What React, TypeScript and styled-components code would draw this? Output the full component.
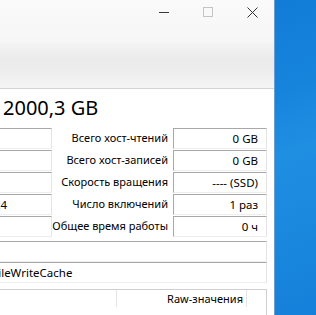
import React from 'react';
import styled, { createGlobalStyle } from 'styled-components';

const GlobalStyle = createGlobalStyle`
  html, body {
    margin: 0;
    padding: 0;
    overflow: hidden;
  }
  body {
    font-family: "Noto Sans", "Open Sans", "Liberation Sans", sans-serif;
    font-size: 11px;
    color: #000;
  }
`;

// рабочий стол за окном
const Desktop = styled.div`
  display: flex;
  width: 316px;
  height: 315px;
  background: linear-gradient(160deg, #0b74d1 0%, #1784dc 45%, #1f8fe2 60%, #1580d9 100%);
`;

const Window = styled.div`
  width: 274px;
  height: 315px;
  background: #fff;
  border-right: 1px solid #6f9ccc;
  display: flex;
  flex-direction: column;
  overflow: hidden;
`;

const TitleBar = styled.div`
  height: 43px;
  flex: none;
  background: linear-gradient(#fafafa, #f6f6f6);
  display: flex;
  justify-content: flex-end;
  align-items: flex-start;
`;

const CaptionButton = styled.div`
  width: 44px;
  height: 24px;
  display: flex;
  align-items: center;
  justify-content: center;
`;

const MenuBand = styled.div`
  height: 45px;
  flex: none;
  background: linear-gradient(#f3f3f3 0%, #ebebeb 35%, #ececec 60%, #f5f5f5 100%);
  border-bottom: 1px solid #d3d3d3;
`;

const Content = styled.div`
  flex: 1;
  padding: 7px 7px 0 0;
  display: flex;
  flex-direction: column;
`;

const Capacity = styled.div`
  font-size: 20px;
  line-height: 24px;
  padding-left: 3px;
  white-space: nowrap;
`;

const InfoGrid = styled.div`
  margin-top: 8px;
  display: grid;
  grid-template-columns: 52px minmax(0, 1fr) 94px;
  grid-auto-rows: 22px;
`;

const Field = styled.div`
  box-sizing: border-box;
  height: 21px;
  border-top: 1px solid #a8a8a8;
  border-left: 1px solid #a8a8a8;
  border-right: 1px solid #e4e4e4;
  border-bottom: 1px solid #eeeeee;
  display: flex;
  align-items: center;
  justify-content: flex-end;
  padding-right: 8px;
  font-size: 11.5px;
  white-space: nowrap;
  overflow: hidden;
`;

const CutField = styled(Field)`
  border-left: none;
  padding-right: 44px;
`;

const Label = styled.div`
  display: flex;
  align-items: center;
  justify-content: flex-end;
  padding-right: 5px;
  height: 19px;
  white-space: nowrap;
`;

const WideField = styled.div<{ $gap: number }>`
  box-sizing: border-box;
  margin-top: ${p => p.$gap}px;
  height: 21px;
  border-top: 1px solid #a8a8a8;
  border-right: 1px solid #e4e4e4;
  border-bottom: 1px solid #eeeeee;
  display: flex;
  align-items: center;
  font-size: 11.5px;
  white-space: nowrap;
  overflow: hidden;
`;

const FeatureText = styled.span`
  margin-left: -29px;
`;

const Table = styled.div`
  margin-top: 6px;
  height: 40px;
  border-top: 1px solid #cfcfcf;
  border-right: 1px solid #cfcfcf;
`;

const HeaderRow = styled.div`
  display: grid;
  grid-template-columns: 117px 130px 1fr;
  height: 17px;
`;

const HeaderCell = styled.div`
  border-right: 1px solid #e5e5e5;
  display: flex;
  align-items: center;
  justify-content: flex-end;
  padding-right: 3px;
  white-space: nowrap;
`;

const rows = [
  { left: '', label: 'Всего хост-чтений', value: '0 GB' },
  { left: '', label: 'Всего хост-записей', value: '0 GB' },
  { left: '', label: 'Скорость вращения', value: '---- (SSD)' },
  { left: 'PCIe 4.0 x4 | PCIe 4.0 x4', label: 'Число включений', value: '1 раз' },
  { left: '', label: 'Общее время работы', value: '0 ч' },
];

export default function App() {
  return (
    <>
      <GlobalStyle />
      <Desktop>
        <Window>
          <TitleBar>
            <CaptionButton>
              <svg width="10" height="10" viewBox="0 0 10 10">
                <line x1="0" y1="5.5" x2="10" y2="5.5" stroke="#3a3a3a" strokeWidth="1" />
              </svg>
            </CaptionButton>
            <CaptionButton>
              <svg width="10" height="10" viewBox="0 0 10 10">
                <rect x="0.5" y="0.5" width="9" height="9" fill="none" stroke="#c4c4c4" strokeWidth="1" />
              </svg>
            </CaptionButton>
            <CaptionButton>
              <svg width="11" height="11" viewBox="0 0 11 11">
                <path d="M0.5 0.5 L10.5 10.5 M10.5 0.5 L0.5 10.5" stroke="#333" strokeWidth="1" />
              </svg>
            </CaptionButton>
          </TitleBar>
          <MenuBand />
          <Content>
            <Capacity>2000,3 GB</Capacity>
            <InfoGrid>
              {rows.map(r => (
                <React.Fragment key={r.label}>
                  <CutField>{r.left}</CutField>
                  <Label>{r.label}</Label>
                  <Field>{r.value}</Field>
                </React.Fragment>
              ))}
            </InfoGrid>
            <WideField $gap={3} />
            <WideField $gap={0}>
              <FeatureText>VolatileWriteCache</FeatureText>
            </WideField>
            <Table>
              <HeaderRow>
                <HeaderCell />
                <HeaderCell>Raw-значения</HeaderCell>
                <div />
              </HeaderRow>
            </Table>
          </Content>
        </Window>
      </Desktop>
    </>
  );
}
